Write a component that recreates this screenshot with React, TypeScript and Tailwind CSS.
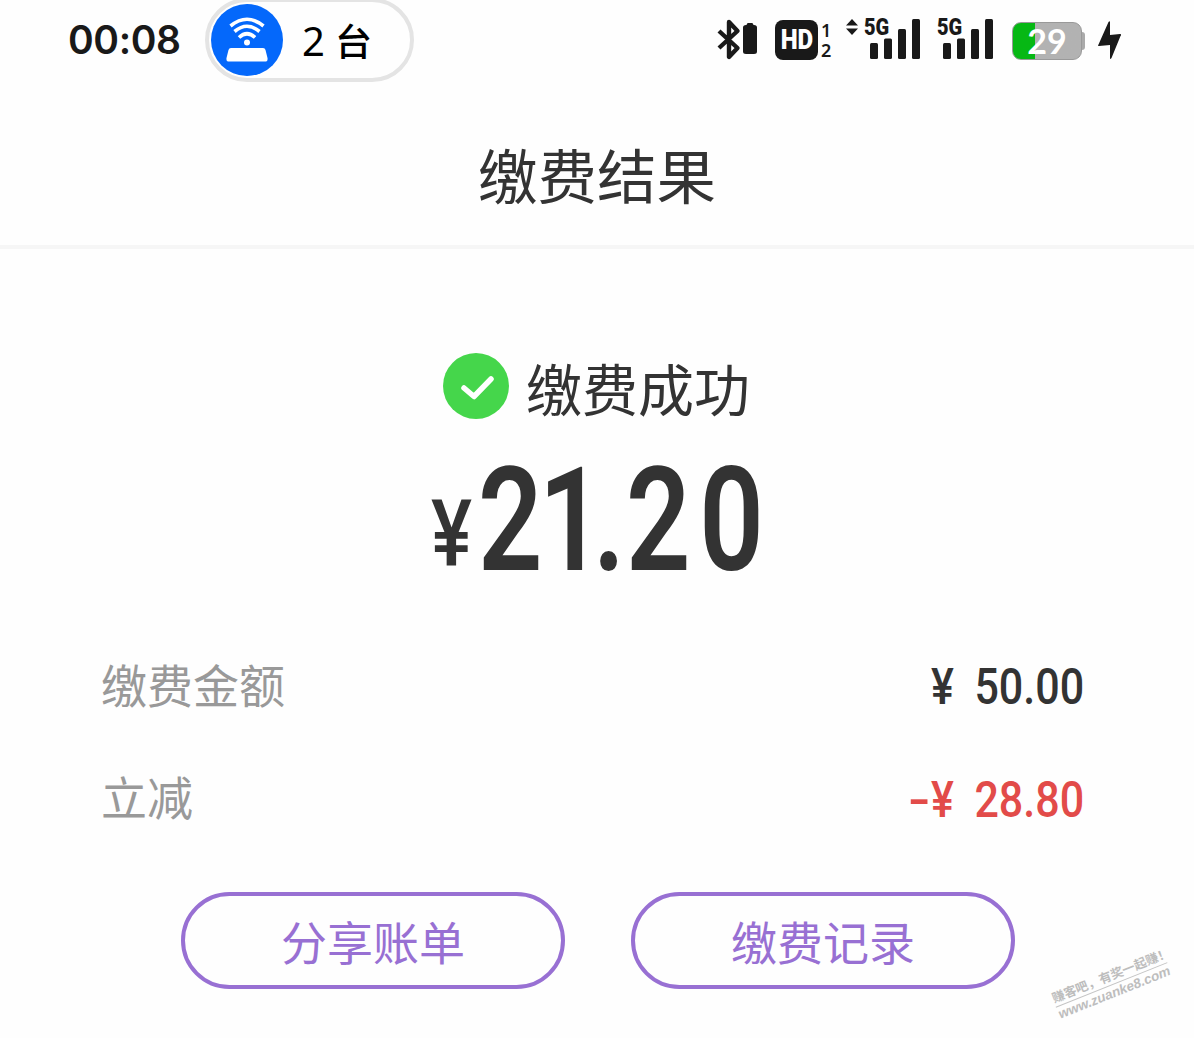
import React from "react";

const cjk = "font-['Noto_Sans_CJK_SC',sans-serif]";

function Signal() {
  return (
    <div className="relative mt-[1px]">
      <svg width="51" height="40" viewBox="0 0 51 40" fill="#191919">
        <rect x="0" y="24" width="8" height="16" rx="1.5" />
        <rect x="14" y="19.5" width="8" height="20.5" rx="1.5" />
        <rect x="28" y="10" width="8" height="30" rx="1.5" />
        <rect x="42" y="0" width="8" height="40" rx="1.5" />
      </svg>
      <span className="absolute -top-[4px] -left-[6px] origin-left scale-x-[0.87] font-[Roboto,sans-serif] text-[23px] leading-[26px] font-black">
        5G
      </span>
    </div>
  );
}

function StatusBar() {
  return (
    <div className="flex h-[82px] items-start pl-[68px] text-[#191919]">
      <span className="w-[137px] whitespace-nowrap pt-[17px] font-[Inter,sans-serif] text-[39px] leading-[46px] font-semibold tracking-[-0.4px]">
        00:08
      </span>
      <div className="mt-[-2px] flex h-[84px] w-[209px] items-center rounded-full border-4 border-[#e4e4e4] pl-[2px]">
        <svg width="72" height="72" viewBox="0 0 72 72">
          <circle cx="36" cy="36" r="36" fill="#0468fb" />
          <g fill="none" stroke="#fff" strokeWidth="3.6">
            <path d="M19.500 22Q36 8.500 52.500 22" />
            <path d="M23.500 27.500Q36 17 48.500 27.500" />
            <path d="M28 33.500Q36 26 44 33.500" />
          </g>
          <circle cx="36" cy="38.500" r="3" fill="#fff" />
          <path d="M20 44h32q2 0 2.500 2l2 8q.5 3.500-2.500 3.500h-36q-3 0-2.500-3.500l2-8q.5-2 2.500-2z" fill="#fff" />
        </svg>
        <span className="ml-[19px] flex items-baseline gap-[10px] whitespace-nowrap font-medium text-black">
          <span className="font-['Noto_Sans',sans-serif] text-[40px] leading-[50px] font-normal">2</span>
          <span className="text-[37px] leading-[50px]">台</span>
        </span>
      </div>
      <div className="ml-[302px] flex items-start pt-[18px]">
        <svg width="43" height="44" viewBox="0 0 43 44">
          <path d="M3 13L21.500 30L13 39V4L21.500 13L3 30" fill="none" stroke="#191919" strokeWidth="4.400" strokeLinejoin="round" />
          <path d="M32 5h4q1 0 1.500 2h.5q3 0 3 2.500v24q0 2.500-3 2.500H30q-3 0-3-2.500V9.500q0-2.500 3-2.500h.5q.5-2 1.500-2z" fill="#191919" />
        </svg>
        <div className="mt-[2px] ml-4 flex h-10 w-[43px] items-center justify-center rounded-[8px] bg-[#191919] font-[Roboto,sans-serif] text-[28px] font-black text-white">
          <span className="scale-x-[0.86]">HD</span>
        </div>
        <div className="mt-[2px] ml-[3px] w-[12px] font-['Noto_Sans',sans-serif] text-[18px] leading-[20px] font-semibold">
          <div>1</div>
          <div>2</div>
        </div>
        <svg className="mt-[1px] ml-[13px]" width="12" height="17" viewBox="0 0 12 17" fill="#191919">
          <path d="M6 0L12 6.500H0zM6 16L0 9.500H12z" />
        </svg>
        <div className="ml-[12px]">
          <Signal />
        </div>
        <div className="ml-[22px]">
          <Signal />
        </div>
        <div className="mt-[4px] ml-[18px] flex items-center">
          <div className="flex h-[38px] w-[70px] items-center justify-center rounded-[9px] border border-[#999] bg-linear-to-r from-[#06b814] from-32% to-[#b2b2b2] to-32% font-[Lato,sans-serif] text-[34px] leading-[36px] font-bold text-white">
            29
          </div>
          <div className="h-[18px] w-[3px] rounded-r-[3px] bg-[#aaa]" />
        </div>
        <svg className="mt-[3px] ml-[13px]" width="23" height="39" viewBox="0 0 23 39" fill="#191919">
          <path d="M10.500 1Q12 -.5 12 1.500V14L22 13Q24 13 22.500 15L13.500 37Q12 39 12 37V24L1 25Q-.5 25 .5 23.500z" />
        </svg>
      </div>
    </div>
  );
}

function Row({ label, children }: { label: string; children: React.ReactNode }) {
  return (
    <div className="flex h-[112px] items-center justify-between pr-[110px] pl-[101px]">
      <span className="pb-[6px] text-[46px] leading-[60px] text-[#999]">{label}</span>
      {children}
    </div>
  );
}

function PillButton({ children }: { children: string }) {
  return (
    <button className="flex h-[97px] w-[384px] items-center justify-center rounded-full border-4 border-[#9870d3] pb-[1px] text-[46px] text-[#9870d3]">
      {children}
    </button>
  );
}

export default function App() {
  return (
    <main className={"relative flex h-[1038px] w-[1194px] flex-col overflow-hidden bg-[#fefefe] text-[#333] " + cjk}>
      <StatusBar />
      <header className="flex h-[167px] justify-center border-b-4 border-[#f6f6f6] pt-[51px] text-[59.5px] leading-[80px]">
        缴费结果
      </header>
      <div className="mt-[100px] flex h-[76px] items-center pl-[443px]">
        <svg className="-mt-[3px]" width="66" height="66" viewBox="0 0 66 66">
          <circle cx="33" cy="33" r="33" fill="#45d64b" />
          <path d="M21 35L31 43.500L48 26" fill="none" stroke="#fff" strokeWidth="5.500" strokeLinecap="round" strokeLinejoin="round" />
        </svg>
        <span className="ml-[17px] text-[56px] leading-[76px]">缴费成功</span>
      </div>
      <div className="mt-[23px] flex h-[146px] items-baseline pl-[431px] font-[Roboto,sans-serif] text-[144px] leading-[146px] font-medium">
        <span className="relative -top-[4px] inline-block w-[47px] origin-left scale-x-[0.84] text-[92px]">¥</span>
        <span className="inline-block origin-left scale-x-[0.785] whitespace-nowrap font-semibold">
          <span className="tracking-[-5px]">2</span>
          <span className="tracking-[-13px]">1</span>
          <span className="tracking-[1px]">.</span>
          <span className="tracking-[11px]">20</span>
        </span>
      </div>
      <section className="mt-[36px]">
        <Row label="缴费金额">
          <span className="flex origin-right scale-x-[0.86] gap-[24px] pt-[3px] font-[Roboto,sans-serif] text-[50px] font-medium">
            <span>¥</span>
            <span>50.00</span>
          </span>
        </Row>
        <Row label="立减">
          <span className="flex origin-right scale-x-[0.86] pt-[5px] font-[Roboto,sans-serif] text-[50px] font-medium text-[#e24b49]">
            <span className="mr-[1px] inline-block origin-right scale-x-[1.5]">-</span>
            <span className="mr-[24px]">¥</span>
            <span>28.80</span>
          </span>
        </Row>
      </section>
      <div className="mt-[38px] flex gap-[66px] pl-[181px]">
        <PillButton>分享账单</PillButton>
        <PillButton>缴费记录</PillButton>
      </div>
      <div className="absolute top-[990px] left-[1049px] w-[120px] origin-top-left -rotate-[21.8deg] whitespace-nowrap text-[#bdbdbd]">
        <div className="h-[19px] border-b border-[#c4c4c4] text-[12.6px] leading-[18px] font-bold">赚客吧，有奖一起赚！</div>
        <div className="font-['Liberation_Sans',sans-serif] text-[13.5px] leading-[16px] font-bold italic">www.zuanke8.com</div>
      </div>
    </main>
  );
}
